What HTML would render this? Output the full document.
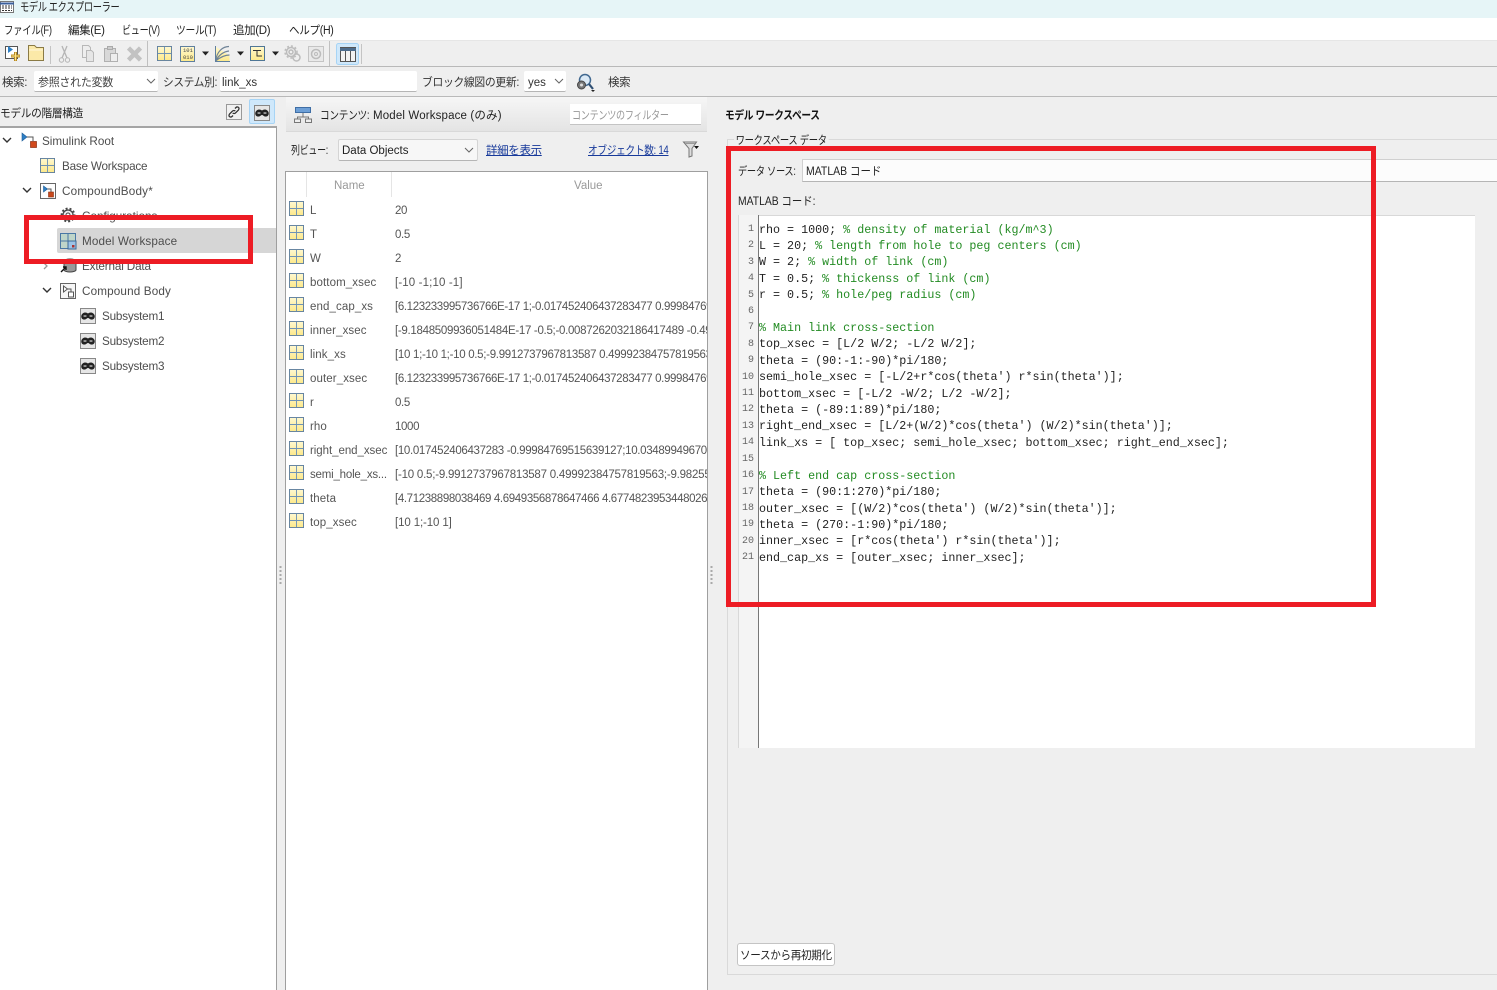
<!DOCTYPE html>
<html lang="ja"><head><meta charset="utf-8"><title>モデル エクスプローラー</title>
<style>
html,body{margin:0;padding:0;width:1497px;height:990px;overflow:hidden;background:#efefef}
body{position:relative;font-family:"Liberation Sans","Noto Sans CJK JP",sans-serif;font-size:12px;color:#333}
.b{position:absolute;box-sizing:border-box}
.t{position:absolute;white-space:nowrap;line-height:16px;height:16px;margin-top:1px;transform-origin:left center}
.i{position:absolute;overflow:visible}
.g{margin-top:-1px}
.tree{color:#4d4d4d;font-size:11.7px;margin-top:2px}
.jp{font-size:11.5px;letter-spacing:-.35px}
.n{color:#555;font-size:11.5px;letter-spacing:.1px}
.v{color:#555;font-size:11.5px;letter-spacing:-.37px;width:312px;overflow:hidden}
.field{background:#fff;border-bottom:1px solid #b5b5b5;border-radius:2px}
.red{position:absolute;box-sizing:border-box;border:5px solid #ed1c24}
a{color:#17399a;text-decoration:underline}
#code{position:absolute;left:759px;top:221.6px;margin:0;font:11.7px/16.4px "Liberation Mono",monospace;color:#222;white-space:pre}
#code i{font-style:normal;color:#228b22}
#nums{position:absolute;left:738px;width:16px;top:222px;margin:0;font:10px/16.4px "Liberation Mono",monospace;color:#666;text-align:right;white-space:pre}
</style></head><body>
<svg width="0" height="0" style="position:absolute"><defs>
<linearGradient id="y" x1="0" y1="0" x2="0" y2="1"><stop offset="0" stop-color="#fff8d0"/><stop offset="1" stop-color="#fde98a"/></linearGradient>
<symbol id="grid" viewBox="0 0 16 16"><rect x=".5" y=".5" width="15" height="15" fill="url(#y)" stroke="#5f7f9f"/><path d="M8 1v14M1 8h14" stroke="#6f93b5" fill="none"/></symbol>
<symbol id="mask" viewBox="0 0 16 16"><rect x=".5" y=".5" width="15" height="15" fill="#e6e6e6" stroke="#888"/><path d="M1.500 7C3 4 6 4 8 5.500 10 4 13 4 14.500 7 15.500 10 13.500 12 11 11.500 9.500 11.300 9 10 8 10 7 10 6.500 11.300 5 11.500 2.500 12 .5 10 1.500 7Z" fill="#222"/><ellipse cx="5" cy="8" rx="1.700" ry=".9" fill="#a8a8a8"/><ellipse cx="11" cy="8" rx="1.700" ry=".9" fill="#a8a8a8"/></symbol>
<symbol id="model" viewBox="0 0 16 16"><rect x=".5" y=".5" width="15" height="15" fill="#fdfdfd" stroke="#666"/><path d="M3.500 3v6l4-3z" fill="#2f7fc4" stroke="#1c5d99" stroke-width=".6"/><path d="M7.500 6H11v3" fill="none" stroke="#555"/><rect x="8.500" y="9" width="5" height="5" fill="#c9491d" stroke="#8a2e10" stroke-width=".6"/></symbol>
</defs></svg>

<!-- title bar -->
<div class="b" style="left:0;top:0;width:1497px;height:18px;background:#e6f5f7"></div>
<svg class="i" style="left:0;top:1px" width="14" height="12" viewBox="0 0 14 12"><rect x=".5" y=".5" width="13" height="11" fill="#fff" stroke="#777"/><path d="M0 2.500h14" stroke="#3a5f9c" stroke-width="2"/><path d="M2 5h10M2 7h10M2 9.500h10" stroke="#333" stroke-dasharray="2 1"/></svg>
<div class="t" style="left:20px;top:-2px;font-size:12px;letter-spacing:-.5px;color:#222;transform:scaleX(.77)">モデル エクスプローラー</div>

<!-- menu -->
<div class="b" style="left:0;top:18px;width:1497px;height:23px;background:#fff;border-bottom:1px solid #e6e6e6"></div>
<div class="t jp" style="left:4px;top:22px;color:#222;transform:scaleX(.82)">ファイル(F)</div>
<div class="t jp" style="left:68px;top:22px;color:#222">編集(E)</div>
<div class="t jp" style="left:122px;top:22px;color:#222;transform:scaleX(.79)">ビュー(V)</div>
<div class="t jp" style="left:176px;top:22px;color:#222;transform:scaleX(.85)">ツール(T)</div>
<div class="t jp" style="left:233px;top:22px;color:#222">追加(D)</div>
<div class="t jp" style="left:289px;top:22px;color:#222;transform:scaleX(.92)">ヘルプ(H)</div>

<!-- toolbar -->
<div class="b" style="left:0;top:66px;width:1497px;height:1px;background:#b9b9b9"></div>
<div class="b" style="left:0;top:96px;width:1497px;height:1px;background:#b9b9b9"></div>
<svg class="i" style="left:0;top:41px" width="370" height="26" viewBox="0 0 370 26">
<rect x="5.500" y="5.500" width="12" height="12" fill="#fff" stroke="#555"/><path d="M8 5v7l5-3.500z" fill="#2f7fc4"/><path d="M11 15h9M15.500 11v9" stroke="#b98a22" stroke-width="3"/><path d="M11.500 15h8M15.500 11.500v8" stroke="#fbe48a"/>
<path d="M28.500 6.500v-2h6l2 2h7v13h-15z" fill="#fbe9a8" stroke="#8a7a45"/><path d="M29 9h14" stroke="#fff8dc"/>
<path d="M50.500 5v18M361.500 3v20" stroke="#c4c4c4"/><path d="M147.500 0v25M329.500 0v25" stroke="#c0c0c0"/>
<path d="M62 5l5 12M67 5l-5 12" stroke="#b5b5b5" stroke-width="1.300"/><circle cx="61.500" cy="19" r="2.200" fill="none" stroke="#b5b5b5"/><circle cx="67.500" cy="19" r="2.200" fill="none" stroke="#b5b5b5"/>
<path d="M82.500 4.500h6l2 2v10h-8z" fill="#eee" stroke="#b8b8b8"/><path d="M86.500 9.500h5l2 2v9h-7z" fill="#e6e6e6" stroke="#b8b8b8"/>
<rect x="104.500" y="7.500" width="11" height="13" fill="#d8d8d8" stroke="#b0b0b0"/><rect x="107.500" y="5.500" width="5" height="3" fill="#ccc" stroke="#aaa"/><rect x="110.500" y="12.500" width="7" height="8" fill="#eee" stroke="#b0b0b0"/>
<path d="M128.500 7l12 12M140.500 7l-12 12" stroke="#c2c2c2" stroke-width="4.500"/>
<use href="#grid" x="157" y="5" width="15" height="15"/>
<rect x="180.500" y="5.500" width="14" height="15" fill="url(#y)" stroke="#5f7f9f"/><text x="183" y="11" font-family="Liberation Mono" font-size="5.500" fill="#444">101</text><text x="183" y="18" font-family="Liberation Mono" font-size="5.500" fill="#444">010</text>
<path d="M202 10.500h7l-3.500 4zM237 10.500h7l-3.500 4zM272 10.500h7l-3.500 4z" fill="#222"/>
<path d="M215.500 5.500v15h14v-6z" fill="url(#y)"/><path d="M215.500 20C217 10 223 5.500 229 5.500M215.500 20C219 14 224 10.500 229 10M215.500 20c5-4 9-6 14-6" fill="none" stroke="#6f8397" stroke-width="1.200"/><path d="M215 20.500h15M215.500 5v16" stroke="#5f7f9f"/>
<rect x="250.500" y="5.500" width="14" height="14" fill="url(#y)" stroke="#4f7696"/><path d="M253 9.500h8M257 9.500v5.500h5" stroke="#333" fill="none"/>
<g fill="none" stroke="#bcbcbc" stroke-width="1.500"><circle cx="291" cy="11" r="4.500"/><circle cx="291" cy="11" r="2"/><circle cx="296.500" cy="16.500" r="3.500"/><circle cx="291" cy="11" r="6" stroke-dasharray="2 2"/></g>
<rect x="308.500" y="5.500" width="15" height="15" fill="#e9e9e9" stroke="#c4c4c4"/><circle cx="316" cy="13" r="4.500" fill="none" stroke="#bcbcbc" stroke-width="1.500"/><circle cx="316" cy="13" r="1.500" fill="none" stroke="#bcbcbc"/>
<rect x="336.500" y="2.500" width="22" height="21" rx="2" fill="#cfe8fb" stroke="#a7d4f5"/><rect x="340.500" y="6.500" width="15" height="14" fill="#f2f2f2" stroke="#555"/><path d="M340 7h16v3h-16z" fill="#4d6c8c"/><path d="M345.500 10v10M350.500 10v10" stroke="#555"/>
</svg>

<!-- search row -->
<div class="t jp" style="left:2px;top:74px">検索:</div>
<div class="b field" style="left:34px;top:71px;width:124px;height:21px"></div>
<div class="t jp" style="left:38px;top:74px;color:#444;transform:scaleX(.96)">参照された変数</div>
<svg class="i" style="left:146px;top:78px" width="10" height="7"><path d="M1 1l4 4 4-4" fill="none" stroke="#666"/></svg>
<div class="t jp" style="left:163px;top:74px;transform:scaleX(.93)">システム別:</div>
<div class="b field" style="left:220px;top:71px;width:197px;height:21px"></div>
<div class="t" style="left:222px;top:74px;font-size:11.5px;color:#333">link_xs</div>
<div class="t jp" style="left:422px;top:74px;transform:scaleX(.94)">ブロック線図の更新:</div>
<div class="b field" style="left:524px;top:71px;width:42px;height:21px"></div>
<div class="t" style="left:528px;top:74px;font-size:11.5px;color:#333">yes</div>
<svg class="i" style="left:554px;top:78px" width="10" height="7"><path d="M1 1l4 4 4-4" fill="none" stroke="#666"/></svg>
<svg class="i" style="left:576px;top:73px" width="20" height="20" viewBox="0 0 20 20"><circle cx="9" cy="7" r="5.500" fill="#dbe9f5" stroke="#41688f" stroke-width="1.500"/><path d="M13 11l4 5" stroke="#2f4f73" stroke-width="2.200"/><circle cx="5.500" cy="12" r="4" fill="#777" stroke="#444"/><circle cx="5.500" cy="12" r="1.500" fill="#ddd"/><path d="M15 17h4l-2 2z" fill="#222"/></svg>
<div class="t jp" style="left:608px;top:74px">検索</div>

<!-- left panel -->
<div class="t jp" style="left:0;top:105px;color:#222;transform:scaleX(.93)">モデルの階層構造</div>
<svg class="i" style="left:226px;top:104px" width="17" height="17" viewBox="0 0 17 17"><rect x=".5" y=".5" width="15" height="15" fill="#f1f1f1" stroke="#999"/><path d="M9 4.500l1-1c1-1 3-.5 3 1 0 .6-.2 1-.5 1.400l-3 3c-.8.800-2 .8-2.800 0M7 11.500l-1 1c-1 1-3 .5-3-1 0-.6.2-1 .5-1.400l3-3c.8-.8 2-.8 2.800 0" fill="none" stroke="#333" stroke-width="1.300"/></svg>
<div class="b" style="left:249px;top:99px;width:26px;height:25px;background:#cfe8fb;border:1px solid #a7d4f5;border-radius:2px"></div>
<svg class="i" style="left:254px;top:105px" width="16" height="16"><use href="#mask" width="16" height="16"/></svg>
<div class="b" style="left:0;top:126px;width:277px;height:864px;background:#fff;border-top:2px solid #a5a5a5;border-right:1px solid #9f9f9f"></div>
<div class="b" style="left:57px;top:228px;width:219px;height:25px;background:#d6d6d6;border-radius:2px 0 0 2px"></div>

<svg class="i" style="left:0;top:130px" width="60" height="180" viewBox="0 0 60 180"><g fill="none" stroke="#333" stroke-width="1.400"><path d="M3 8l4 4 4-4M23 58l4 4 4-4M43 158l4 4 4-4"/></g><path d="M44 133l3 3-3 3" fill="none" stroke="#999" stroke-width="1.300"/></svg>
<svg class="i" style="left:21px;top:132px" width="16" height="16" viewBox="0 0 16 16"><path d="M1 1v8l5-4z" fill="#2f7fc4" stroke="#1c5d99" stroke-width=".6"/><path d="M6 5h6v4" fill="none" stroke="#555"/><rect x="9.500" y="9.500" width="6" height="6" fill="#d1491c" stroke="#8a2e10" stroke-width=".7"/></svg>
<div class="t tree" style="left:42px;top:132px">Simulink Root</div>
<svg class="i" style="left:40px;top:158px" width="15" height="15"><use href="#grid" width="15" height="15"/></svg>
<div class="t tree" style="left:62px;top:157px;letter-spacing:-.2px">Base Workspace</div>
<svg class="i" style="left:40px;top:183px" width="16" height="16"><use href="#model" width="16" height="16"/></svg>
<div class="t tree" style="left:62px;top:182px;letter-spacing:.2px">CompoundBody*</div>
<svg class="i" style="left:60px;top:207px" width="16" height="16" viewBox="0 0 16 16"><circle cx="8" cy="8" r="5" fill="#eee" stroke="#444" stroke-width="1.300"/><circle cx="8" cy="8" r="6.500" fill="none" stroke="#444" stroke-width="1.800" stroke-dasharray="2 2"/><circle cx="8" cy="8" r="2" fill="#fff" stroke="#444"/></svg>
<div class="t tree" style="left:82px;top:207px">Configurations</div>
<svg class="i" style="left:60px;top:233px" width="16" height="16" viewBox="0 0 16 16"><rect x=".5" y=".5" width="15" height="15" fill="#bfd5c9" stroke="#4a78a5"/><path d="M8 1v14M1 8h14" stroke="#4a78a5"/><rect x="8" y="8" width="8" height="8" fill="#9dc3e6" stroke="#3c6a98"/><rect x="12" y="12" width="2.500" height="2.500" fill="#a33"/></svg>
<div class="t tree" style="left:82px;top:232px;letter-spacing:.13px">Model Workspace</div>
<svg class="i" style="left:60px;top:258px" width="17" height="15" viewBox="0 0 17 15"><ellipse cx="10" cy="3" rx="6" ry="2" fill="#bbb" stroke="#444"/><path d="M4 3v9c0 1 3 2 6 2s6-1 6-2V3" fill="#999" stroke="#444"/><path d="M1 14l5-5M3 9h3v3" stroke="#111" stroke-width="1.400" fill="none"/></svg>
<div class="t tree" style="left:82px;top:257px;letter-spacing:-.15px">External Data</div>
<svg class="i" style="left:60px;top:283px" width="16" height="16" viewBox="0 0 16 16"><rect x=".5" y=".5" width="15" height="15" fill="#f6f6f6" stroke="#666"/><path d="M3.500 3v6l4-3z" fill="#fff" stroke="#555"/><path d="M7.500 6H11v3" fill="none" stroke="#555"/><rect x="8.500" y="9" width="5" height="5" fill="#fff" stroke="#555"/></svg>
<div class="t tree" style="left:82px;top:282px;letter-spacing:.15px">Compound Body</div>
<svg class="i" style="left:80px;top:308px" width="16" height="16"><use href="#mask" width="16" height="16"/></svg>
<div class="t tree" style="left:102px;top:307px;letter-spacing:-.2px">Subsystem1</div>
<svg class="i" style="left:80px;top:333px" width="16" height="16"><use href="#mask" width="16" height="16"/></svg>
<div class="t tree" style="left:102px;top:332px;letter-spacing:-.2px">Subsystem2</div>
<svg class="i" style="left:80px;top:358px" width="16" height="16"><use href="#mask" width="16" height="16"/></svg>
<div class="t tree" style="left:102px;top:357px;letter-spacing:-.2px">Subsystem3</div>

<!-- splitters -->
<svg class="i" style="left:279px;top:565px" width="4" height="20"><path d="M1.500 1v19" stroke="#aaa" stroke-width="2" stroke-dasharray="2 2"/></svg>
<svg class="i" style="left:710px;top:565px" width="4" height="20"><path d="M1.500 1v19" stroke="#aaa" stroke-width="2" stroke-dasharray="2 2"/></svg>

<!-- middle panel -->
<div class="b" style="left:286px;top:97px;width:421px;height:35px;background:linear-gradient(#f6f6f6,#e4e4e4);border-bottom:1px solid #d9d9d9"></div>
<svg class="i" style="left:294px;top:107px" width="18" height="16" viewBox="0 0 18 16"><rect x="1.500" y=".5" width="15" height="5" fill="#6d9fd6" stroke="#3f6ea5"/><path d="M9 6v4M3.500 12v-2h11v2" fill="none" stroke="#777"/><rect x=".5" y="12" width="6" height="3.500" fill="#eee" stroke="#777"/><rect x="11.500" y="12" width="6" height="3.500" fill="#eee" stroke="#777"/></svg>
<div class="t jp" style="left:320px;top:107px;color:#222;transform:scaleX(.84)">コンテンツ:</div>
<div class="t" style="left:373px;top:107px;font-size:11.5px;color:#222;letter-spacing:.15px">Model Workspace  (のみ)</div>
<div class="b" style="left:570px;top:104px;width:131px;height:21px;background:#fff;border-bottom:1px solid #c4c4c4"></div>
<div class="t jp" style="left:572px;top:107px;color:#999;transform:scaleX(.79)">コンテンツのフィルター</div>

<div class="t jp" style="left:291px;top:142px;color:#222;transform:scaleX(.78)">列ビュー:</div>
<div class="b" style="left:338px;top:139px;width:140px;height:22px;background:#f7f7f7;border:1px solid #d4d4d4;border-bottom-color:#b5b5b5;border-radius:2px"></div>
<div class="t" style="left:342px;top:142px;font-size:11.5px;color:#222">Data Objects</div>
<svg class="i" style="left:464px;top:147px" width="10" height="7"><path d="M1 1l4 4 4-4" fill="none" stroke="#666"/></svg>
<div class="t jp" style="left:486px;top:142px"><a>詳細を表示</a></div>
<div class="t jp" style="left:588px;top:142px;transform:scaleX(.84)"><a>オブジェクト数: 14</a></div>
<svg class="i" style="left:683px;top:141px" width="16" height="17" viewBox="0 0 16 17"><path d="M.5 1h13L9 7.500V15l-3 1V7.500z" fill="#ddd" stroke="#777"/><path d="M2 2.500h10" stroke="#999"/><path d="M11 5h5l-2.500 3z" fill="#111"/></svg>

<div class="b" style="left:285px;top:171px;width:423px;height:819px;background:#fff;border:1px solid #9f9f9f;border-bottom:0"></div>
<div class="b" style="left:306px;top:172px;width:1px;height:25px;background:#e5e5e5"></div>
<div class="b" style="left:391px;top:172px;width:1px;height:25px;background:#e5e5e5"></div>
<div class="t" style="left:334px;top:177px;font-size:11.5px;color:#999">Name</div>
<div class="t" style="left:574px;top:177px;font-size:11.5px;color:#999">Value</div>

<svg class="i g" style="left:289px;top:202px" width="15" height="15"><use href="#grid" width="15" height="15"/></svg><div class="t n" style="left:310px;top:202px">L</div><div class="t v" style="left:395px;top:202px">20</div>
<svg class="i g" style="left:289px;top:226px" width="15" height="15"><use href="#grid" width="15" height="15"/></svg><div class="t n" style="left:310px;top:226px">T</div><div class="t v" style="left:395px;top:226px">0.5</div>
<svg class="i g" style="left:289px;top:250px" width="15" height="15"><use href="#grid" width="15" height="15"/></svg><div class="t n" style="left:310px;top:250px">W</div><div class="t v" style="left:395px;top:250px">2</div>
<svg class="i g" style="left:289px;top:274px" width="15" height="15"><use href="#grid" width="15" height="15"/></svg><div class="t n" style="left:310px;top:274px">bottom_xsec</div><div class="t v" style="left:395px;top:274px;letter-spacing:.13px">[-10 -1;10 -1]</div>
<svg class="i g" style="left:289px;top:298px" width="15" height="15"><use href="#grid" width="15" height="15"/></svg><div class="t n" style="left:310px;top:298px">end_cap_xs</div><div class="t v" style="left:395px;top:298px">[6.123233995736766E-17 1;-0.017452406437283477 0.99984769</div>
<svg class="i g" style="left:289px;top:322px" width="15" height="15"><use href="#grid" width="15" height="15"/></svg><div class="t n" style="left:310px;top:322px">inner_xsec</div><div class="t v" style="left:395px;top:322px;letter-spacing:-.3px">[-9.1848509936051484E-17 -0.5;-0.0087262032186417489 -0.49</div>
<svg class="i g" style="left:289px;top:346px" width="15" height="15"><use href="#grid" width="15" height="15"/></svg><div class="t n" style="left:310px;top:346px">link_xs</div><div class="t v" style="left:395px;top:346px;letter-spacing:-.3px">[10 1;-10 1;-10 0.5;-9.9912737967813587 0.49992384757819563</div>
<svg class="i g" style="left:289px;top:370px" width="15" height="15"><use href="#grid" width="15" height="15"/></svg><div class="t n" style="left:310px;top:370px">outer_xsec</div><div class="t v" style="left:395px;top:370px">[6.123233995736766E-17 1;-0.017452406437283477 0.99984769</div>
<svg class="i g" style="left:289px;top:394px" width="15" height="15"><use href="#grid" width="15" height="15"/></svg><div class="t n" style="left:310px;top:394px">r</div><div class="t v" style="left:395px;top:394px">0.5</div>
<svg class="i g" style="left:289px;top:418px" width="15" height="15"><use href="#grid" width="15" height="15"/></svg><div class="t n" style="left:310px;top:418px">rho</div><div class="t v" style="left:395px;top:418px">1000</div>
<svg class="i g" style="left:289px;top:442px" width="15" height="15"><use href="#grid" width="15" height="15"/></svg><div class="t n" style="left:310px;top:442px;letter-spacing:-.05px">right_end_xsec</div><div class="t v" style="left:395px;top:442px;letter-spacing:-.33px">[10.017452406437283 -0.99984769515639127;10.03489949670</div>
<svg class="i g" style="left:289px;top:466px" width="15" height="15"><use href="#grid" width="15" height="15"/></svg><div class="t n" style="left:310px;top:466px;letter-spacing:-.2px">semi_hole_xs...</div><div class="t v" style="left:395px;top:466px;letter-spacing:-.22px">[-10 0.5;-9.9912737967813587 0.49992384757819563;-9.98255</div>
<svg class="i g" style="left:289px;top:490px" width="15" height="15"><use href="#grid" width="15" height="15"/></svg><div class="t n" style="left:310px;top:490px">theta</div><div class="t v" style="left:395px;top:490px">[4.71238898038469 4.6949356878647466 4.6774823953448026</div>
<svg class="i g" style="left:289px;top:514px" width="15" height="15"><use href="#grid" width="15" height="15"/></svg><div class="t n" style="left:310px;top:514px">top_xsec</div><div class="t v" style="left:395px;top:514px;letter-spacing:-.12px">[10 1;-10 1]</div>

<!-- right panel -->
<div class="t jp" style="left:725px;top:107px;color:#111;font-weight:bold;transform:scaleX(.84)">モデル ワークスペース</div>
<div class="b" style="left:727px;top:139px;width:770px;height:836px;border:1px solid #d9d9d9;border-right:0"></div>
<div class="t jp" style="left:734px;top:132px;padding:0 2px;background:#efefef;color:#222;transform:scaleX(.81)">ワークスペース データ</div>
<div class="t jp" style="left:738px;top:163px;color:#222;transform:scaleX(.8)">データ ソース:</div>
<div class="b" style="left:802px;top:159px;width:695px;height:23px;background:#fcfcfc;border:1px solid #d0d0d0;border-bottom-color:#b5b5b5;border-right:0"></div>
<div class="t" style="left:806px;top:163px;font-size:11.5px;color:#222;transform:scaleX(.91)">MATLAB コード</div>
<div class="t" style="left:738px;top:193px;font-size:11.5px;color:#222;transform:scaleX(.9)">MATLAB コード:</div>

<div class="b" style="left:738px;top:215px;width:737px;height:533px;background:#fff;border-top:1px solid #d8d8d8"></div>
<div class="b" style="left:738px;top:215px;width:21px;height:533px;background:#f4f4f4;border-left:1px solid #d8d8d8;border-right:1px solid #777"></div>
<pre id="nums">1
2
3
4
5
6
7
8
9
10
11
12
13
14
15
16
17
18
19
20
21</pre>
<pre id="code">rho = 1000; <i>% density of material (kg/m^3)</i>
L = 20; <i>% length from hole to peg centers (cm)</i>
W = 2; <i>% width of link (cm)</i>
T = 0.5; <i>% thickenss of link (cm)</i>
r = 0.5; <i>% hole/peg radius (cm)</i>

<i>% Main link cross-section</i>
top_xsec = [L/2 W/2; -L/2 W/2];
theta = (90:-1:-90)*pi/180;
semi_hole_xsec = [-L/2+r*cos(theta') r*sin(theta')];
bottom_xsec = [-L/2 -W/2; L/2 -W/2];
theta = (-89:1:89)*pi/180;
right_end_xsec = [L/2+(W/2)*cos(theta') (W/2)*sin(theta')];
link_xs = [ top_xsec; semi_hole_xsec; bottom_xsec; right_end_xsec];

<i>% Left end cap cross-section</i>
theta = (90:1:270)*pi/180;
outer_xsec = [(W/2)*cos(theta') (W/2)*sin(theta')];
theta = (270:-1:90)*pi/180;
inner_xsec = [r*cos(theta') r*sin(theta')];
end_cap_xs = [outer_xsec; inner_xsec];</pre>

<div class="b" style="left:737px;top:943px;width:98px;height:23px;background:#fff;border:1px solid #c4c4c4;border-radius:3px"></div>
<div class="t jp" style="left:740px;top:947px;color:#222;transform:scaleX(.92)">ソースから再初期化</div>

<!-- annotations -->
<div class="red" style="left:24px;top:215px;width:229px;height:49px"></div>
<div class="red" style="left:726px;top:146px;width:650px;height:461px"></div>
</body></html>
